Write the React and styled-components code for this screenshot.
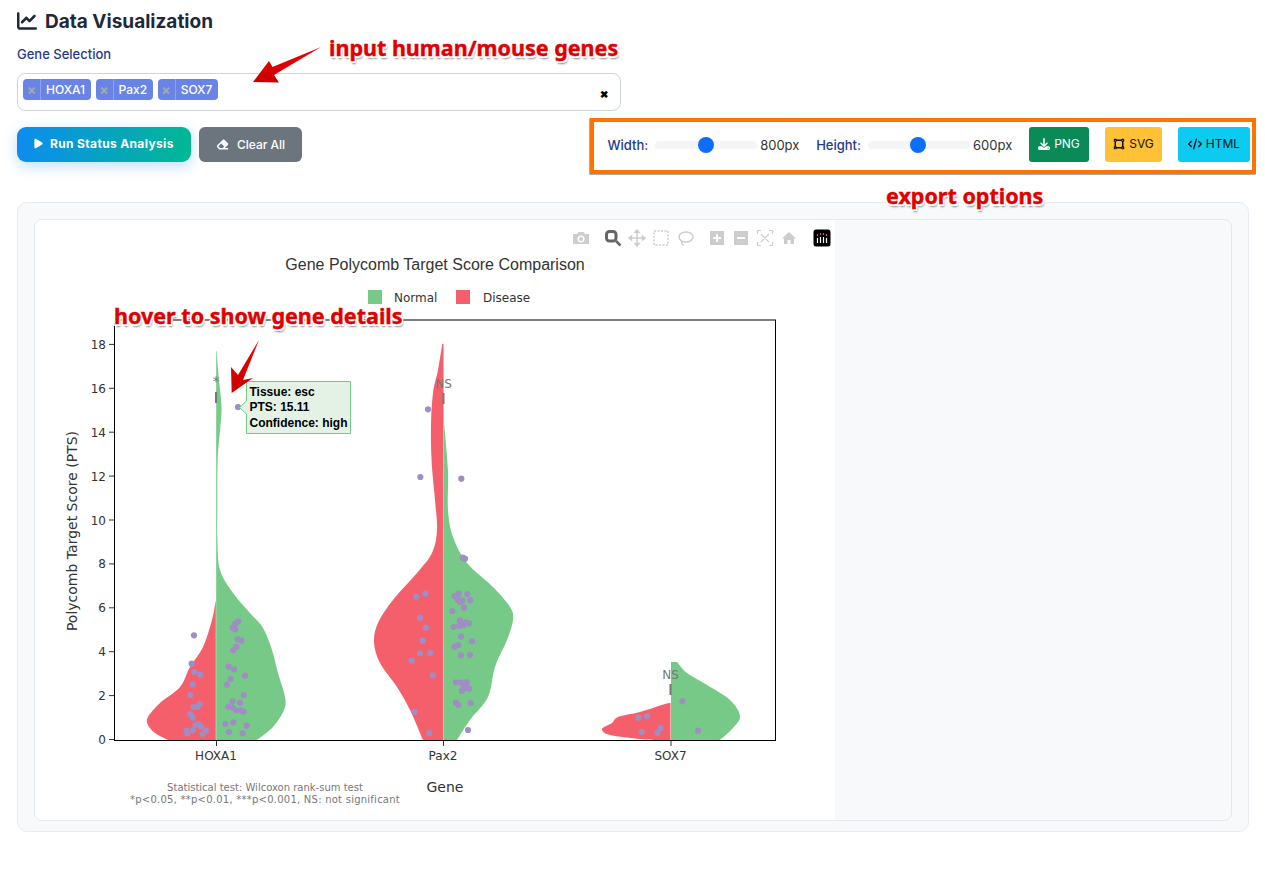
import React from "react";
import styled, { createGlobalStyle } from "styled-components";
import { FaChartLine, FaPlay, FaEraser, FaDownload, FaCode, FaVectorSquare } from "react-icons/fa6";

const GlobalStyle = createGlobalStyle`
  * {
    box-sizing: border-box;
  }
  body {
    margin: 0;
    background: #fff;
    font-family: Inter, "Liberation Sans", sans-serif;
  }
`;

const NORMAL = "#77c987";
const DISEASE = "#f45f6b";
const DOT = "#9f8dc4";

// smooth curve through points read off the reference (page coordinates)
const smooth = (pts) => {
  let d = `M${pts[0][0]} ${pts[0][1]}`;
  for (let i = 0; i < pts.length - 1; i++) {
    const a = pts[Math.max(i - 1, 0)];
    const b = pts[i];
    const c = pts[i + 1];
    const e = pts[Math.min(i + 2, pts.length - 1)];
    const c1x = b[0] + (c[0] - a[0]) / 6;
    const c1y = b[1] + (c[1] - a[1]) / 6;
    const c2x = c[0] - (e[0] - b[0]) / 6;
    const c2y = c[1] - (e[1] - b[1]) / 6;
    d += `C${c1x} ${c1y} ${c2x} ${c2y} ${c[0]} ${c[1]}`;
  }
  return d;
};

const violins = [
  {
    color: NORMAL,
    base: 216.2,
    pts: [
      [216.6, 351], [218.5, 375], [221.5, 407], [220, 430], [218, 453], [217.4, 475], [217.3, 510], [217.4, 540],
      [220, 570], [233, 593], [250, 613], [263, 628], [272, 650], [278, 673], [285, 697], [284, 710], [273, 727], [257, 740],
    ],
  },
  {
    color: DISEASE,
    base: 215.8,
    pts: [
      [215.6, 601], [212, 620], [203, 647], [190, 667], [180, 687], [160, 703], [148, 717], [148, 725], [155, 733], [168, 740],
    ],
  },
  {
    color: DISEASE,
    base: 443.5,
    pts: [
      [442.3, 344], [438, 370], [433, 393], [431, 427], [431.7, 463], [435, 500], [437, 530], [432, 553], [417, 573],
      [393, 600], [378, 623], [374, 642], [380, 663], [397, 687], [410, 710], [423, 740],
    ],
  },
  {
    color: NORMAL,
    base: 443.9,
    pts: [
      [444.2, 425], [448, 470], [448, 510], [453, 537], [467, 563], [493, 587], [510, 607], [513, 620], [507, 640],
      [495, 667], [488, 697], [470, 720], [457, 740],
    ],
  },
  {
    color: DISEASE,
    base: 670.5,
    pts: [
      [670.5, 703], [665, 704], [640, 712], [618, 717], [612, 723], [602, 729], [610, 735], [640, 739], [657, 740],
    ],
  },
  {
    color: NORMAL,
    base: 671,
    pts: [
      [677, 662], [687, 673], [707, 685], [730, 700], [740, 716], [733, 728], [720, 740],
    ],
  },
];

const violinPath = ({ pts, base }) => {
  const last = pts[pts.length - 1];
  return `${smooth(pts)}L${base} ${last[1]}L${base} ${pts[0][1]}Z`;
};

const fromCrop = (ox, oy, list) => list.map(([x, y]) => [ox + x / 3, oy + y / 3]);

const dots = [
  ...fromCrop(100, 540, [
    [282, 286], [275, 371], [283, 396], [301, 404], [278, 434], [271, 465], [299, 492], [293, 500],
    [281, 501], [271, 522], [279, 533], [286, 555], [295, 552], [303, 560], [259, 572], [262, 580],
    [279, 571], [318, 572], [308, 582], [415, 244], [406, 251], [398, 263], [406, 268], [413, 298],
    [424, 302], [409, 320], [400, 331], [386, 380], [402, 388], [435, 407], [392, 417], [381, 434],
    [431, 465], [398, 484], [420, 488], [385, 500], [398, 503], [408, 511], [422, 511], [431, 515],
    [376, 552], [400, 547], [440, 557], [387, 576], [428, 580],
  ]),
  ...fromCrop(360, 330, [
    [204, 238], [181, 441], [304, 446], [308, 683], [315, 686], [196, 791], [169, 800], [296, 791],
    [283, 798], [322, 792], [292, 808], [307, 812], [331, 811], [300, 816], [312, 833], [277, 843],
    [180, 863], [300, 872], [198, 893], [281, 891], [298, 888], [310, 885], [318, 878], [327, 880],
    [303, 920], [188, 932], [336, 933], [295, 945], [284, 950], [180, 970], [211, 969], [303, 976],
    [330, 975], [155, 992], [219, 1036], [288, 1057], [303, 1058], [320, 1056], [318, 1065],
    [327, 1076], [312, 1075], [305, 1083], [288, 1118], [295, 1125], [332, 1119], [164, 1146],
    [324, 1200], [208, 1209],
  ]),
  ...fromCrop(590, 640, [
    [146, 233], [171, 229], [212, 264], [155, 276], [202, 278], [277, 184], [324, 272],
  ]),
  [238, 407],
];

const yTicks = [0, 2, 4, 6, 8, 10, 12, 14, 16, 18];
const xTicks = [
  [216, "HOXA1"],
  [443, "Pax2"],
  [670.5, "SOX7"],
];
const yPos = (v) => 739.5 - v * 21.95;

const Page = styled.div`
  position: relative;
  height: 894px;
  padding: 10px 16px 0 17px;
  overflow: hidden;
`;

const Title = styled.h2`
  display: flex;
  align-items: center;
  gap: 8px;
  margin: 0;
  height: 22px;
  font-size: 19px;
  font-weight: 700;
  color: #1e293b;
`;

const Label = styled.div`
  margin-top: 15px;
  font-size: 13px;
  font-weight: 500;
  line-height: 15px;
  color: #1e3a8a;
`;

const GeneInput = styled.div`
  display: flex;
  align-items: flex-start;
  gap: 5px;
  width: 604px;
  height: 38px;
  margin-top: 11px;
  padding: 5px;
  border: 1px solid #ced4da;
  border-radius: 8px;
  background: #fff;
`;

const Chip = styled.div`
  display: flex;
  align-items: center;
  height: 21px;
  border-radius: 4px;
  background: #6a84e6;
  color: #fff;
  font-size: 12px;
  font-weight: 500;
`;

const ChipClose = styled.span`
  width: 18px;
  height: 100%;
  line-height: 21px;
  text-align: center;
  font-size: 14px;
  font-weight: 700;
  color: #a3a7b3;
  border-right: 1px solid #8ea1ea;
`;

const ChipText = styled.span`
  padding: 0 5.5px 0 5px;
`;

const ClearX = styled.span`
  margin-left: auto;
  margin-right: 7px;
  margin-top: 9px;
  font-size: 10px;
  line-height: 12px;
  font-weight: 900;
  color: #000;
`;

const ActionRow = styled.div`
  display: flex;
  justify-content: space-between;
  align-items: center;
  margin-top: 16px;
  height: 35px;
`;

const Actions = styled.div`
  display: flex;
  gap: 8px;
`;

const RunButton = styled.button`
  display: flex;
  align-items: center;
  gap: 6px;
  width: 174px;
  height: 35px;
  padding: 0 0 2px 16px;
  border: 0;
  border-radius: 9px;
  background: linear-gradient(90deg, #0d8cf0, #00b894);
  box-shadow: 0 4px 14px rgba(13, 140, 240, 0.28);
  color: #fff;
  font-family: inherit;
  font-size: 12px;
  font-weight: 700;
  letter-spacing: 0.35px;
`;

const ClearButton = styled.button`
  display: flex;
  align-items: center;
  justify-content: center;
  gap: 8px;
  width: 103px;
  height: 35px;
  border: 0;
  border-radius: 6px;
  background: #6c757d;
  color: #fff;
  font-family: inherit;
  font-size: 12px;
  font-weight: 500;
`;

const ExportBar = styled.div`
  display: flex;
  align-items: center;
  margin-right: -1px;
`;

const SizeLabel = styled.span`
  margin-left: ${(p) => p.$gap || 0}px;
  font-size: 13px;
  font-weight: 500;
  color: #1e3a8a;
`;

const SliderTrack = styled.div`
  position: relative;
  width: 102px;
  height: 8px;
  margin: 0 3px 0 ${(p) => p.$gap}px;
  border-radius: 4px;
  background: #f3f5f7;
`;

const SliderThumb = styled.div`
  position: absolute;
  top: -4px;
  left: ${(p) => p.$left}px;
  width: 16px;
  height: 16px;
  border-radius: 50%;
  background: #0d6efd;
`;

const SizeValue = styled.span`
  width: 41px;
  font-size: 13px;
  color: #333;
`;

const ExportButton = styled.button`
  display: flex;
  align-items: center;
  justify-content: center;
  gap: 4px;
  width: ${(p) => p.$width}px;
  height: 35px;
  margin-left: ${(p) => p.$gap}px;
  padding: 0 0 2px;
  border: 0;
  border-radius: 3px;
  background: ${(p) => p.$bg};
  color: ${(p) => p.$fg};
  font-family: inherit;
  font-size: 12px;
  font-weight: 400;
`;

const PlotCard = styled.div`
  margin-top: 40px;
  width: 1232px;
  height: 630px;
  padding: 16px 16px 0;
  border: 1px solid #e7ecf3;
  border-radius: 10px;
  background: #f8f9fa;
`;

const PlotFrame = styled.div`
  height: 602px;
  border: 1px solid #e2e8f0;
  border-radius: 8px;
  background: #f8f9fa;
  overflow: hidden;
`;

const PlotSheet = styled.div`
  position: relative;
  width: 800px;
  height: 600px;
  background: #fff;
`;

const Chart = styled.svg`
  display: block;
  width: 800px;
  height: 600px;
`;

const ModeBar = styled.div`
  position: absolute;
  top: 9px;
  left: 537px;
  display: flex;
  align-items: center;
  height: 18px;
`;

const ModeIcon = styled.svg`
  width: 18px;
  height: 18px;
  margin-left: ${(p) => p.$gap || 0}px;
  color: ${(p) => (p.$active ? "#666" : "#cdcdcd")};
`;

const AxisText = styled.text`
  font-family: "DejaVu Sans", sans-serif;
  font-size: 12px;
  fill: #333;
`;

const AxisTitle = styled.text`
  font-family: "DejaVu Sans", sans-serif;
  font-size: 14px;
  fill: #333;
`;

const PlotTitle = styled.text`
  font-family: "Liberation Sans", sans-serif;
  font-size: 16px;
  fill: #333;
`;

const Footnote = styled.text`
  font-family: "DejaVu Sans", sans-serif;
  font-size: 10px;
  letter-spacing: ${(p) => p.$spread || 0}px;
  fill: #777;
`;

const SigMark = styled.text`
  font-family: "DejaVu Sans", sans-serif;
  font-size: ${(p) => p.$size || 12}px;
  fill: #777;
`;

const TipText = styled.text`
  font-family: "Liberation Sans", sans-serif;
  font-size: 12px;
  font-weight: 700;
  fill: #000;
`;

const Callout = styled.div`
  position: absolute;
  left: ${(p) => p.$x}px;
  top: ${(p) => p.$y}px;
  font-family: "Noto Sans", "Open Sans", sans-serif;
  font-size: 21.5px;
  line-height: 28px;
  font-weight: 700;
  white-space: nowrap;
  color: #e00000;
  -webkit-text-stroke: 0.4px #e00000;
  text-shadow: 1.5px 1.5px 0 #fff, -1.5px -1.5px 0 #fff, 1.5px -1.5px 0 #fff, -1.5px 1.5px 0 #fff, 1.5px 2.5px 2px #888;
`;

const ExportHighlight = styled.div`
  position: absolute;
  left: 590px;
  top: 118px;
  width: 666px;
  height: 56px;
  border: 4px solid #ff7300;
  box-shadow: -0.5px 0.5px 0 #555;
  pointer-events: none;
`;

const ArrowLayer = styled.svg`
  position: absolute;
  left: 0;
  top: 0;
  width: 1265px;
  height: 894px;
  pointer-events: none;
`;

const Slider = ({ gap, thumb }) => (
  <SliderTrack $gap={gap}>
    <SliderThumb $left={thumb} />
  </SliderTrack>
);

const ModeBarIcons = () => (
  <ModeBar>
    <ModeIcon viewBox="0 0 18 18" fill="currentColor">
      <path d="M1 5h4l1.500-2h5L13 5h4v10H1z" />
      <circle cx="9" cy="10" r="3.500" fill="#fff" />
      <circle cx="9" cy="10" r="2" />
    </ModeIcon>
    <ModeIcon $gap={14} $active viewBox="0 0 18 18" fill="none" stroke="currentColor">
      <rect x="2.500" y="2.500" width="9.500" height="9.500" rx="3" strokeWidth="3" />
      <path d="M12 12l4.500 4.500" strokeWidth="2.500" />
    </ModeIcon>
    <ModeIcon $gap={6} viewBox="0 0 18 18" fill="none" stroke="currentColor" strokeWidth="1.500">
      <path d="M9 2v14M2 9h14M9 1l-2 2.500h4zM9 17l-2-2.500h4zM1 9l2.500-2v4zM17 9l-2.500-2v4z" />
    </ModeIcon>
    <ModeIcon $gap={6} viewBox="0 0 18 18" fill="none" stroke="currentColor" strokeWidth="1.500" strokeDasharray="2 1.500">
      <rect x="2" y="2" width="14" height="14" />
    </ModeIcon>
    <ModeIcon $gap={6} viewBox="0 0 18 18" fill="none" stroke="currentColor" strokeWidth="1.500">
      <ellipse cx="10" cy="8" rx="7" ry="5" />
      <path d="M6 12c-1 2 0 4 2 4" />
    </ModeIcon>
    <ModeIcon $gap={14} viewBox="0 0 18 18" fill="currentColor">
      <path fillRule="evenodd" d="M2 2h14v14H2zM8 5v3H5v2h3v3h2v-3h3V8h-3V5z" />
    </ModeIcon>
    <ModeIcon $gap={6} viewBox="0 0 18 18" fill="currentColor">
      <path fillRule="evenodd" d="M2 2h14v14H2zM5 8v2h8V8z" />
    </ModeIcon>
    <ModeIcon $gap={6} viewBox="0 0 18 18" fill="none" stroke="currentColor" strokeWidth="1.200">
      <path d="M1.500 5V1.500H5M13 1.500h3.500V5M16.500 13v3.500H13M5 16.500H1.500V13M5 5l8 8M13 5l-8 8" />
    </ModeIcon>
    <ModeIcon $gap={6} viewBox="0 0 18 18" fill="currentColor">
      <path d="M9 3L2 9.500h2V15h3.500v-4h3v4H14V9.500h2z" />
    </ModeIcon>
    <ModeIcon $gap={15} viewBox="0 0 18 18">
      <rect x="0.500" y="0.500" width="17" height="17" rx="2.500" fill="#000" />
      <path d="M4.500 9v5M7.500 8v6M10.500 8v6M13.500 9v5" stroke="#fff" strokeWidth="1.200" />
      <path d="M4.500 5v2M7.500 4v2M10.500 4v2M13.500 5v2" stroke="#f0506e" strokeWidth="1.200" />
    </ModeIcon>
  </ModeBar>
);

const ViolinChart = () => (
  <Chart viewBox="35 220 800 600">
    <PlotTitle x="435" y="270" textAnchor="middle">
      Gene Polycomb Target Score Comparison
    </PlotTitle>

    <rect x="368" y="290" width="14" height="14" fill={NORMAL} />
    <AxisText x="394" y="302">Normal</AxisText>
    <rect x="456" y="290" width="14" height="14" fill={DISEASE} />
    <AxisText x="483" y="302">Disease</AxisText>

    {violins.map((v) => (
      <path key={v.pts[0].join()} d={violinPath(v)} fill={v.color} />
    ))}

    <SigMark x="216" y="386" textAnchor="middle" $size={14}>*</SigMark>
    <rect x="215" y="392" width="2" height="11" fill="#777" />
    <SigMark x="443.500" y="388" textAnchor="middle">NS</SigMark>
    <rect x="442.500" y="393" width="2" height="11" fill="#777" />
    <SigMark x="670.500" y="679" textAnchor="middle">NS</SigMark>
    <rect x="669.500" y="684" width="2" height="11" fill="#777" />

    {dots.map(([x, y]) => (
      <circle key={`${x}-${y}`} cx={x} cy={y} r="3.100" fill={DOT} />
    ))}

    <rect x="114.500" y="320" width="661" height="420.500" fill="none" stroke="#000" />
    {yTicks.map((v) => (
      <g key={v}>
        <path d={`M109 ${yPos(v)}h5`} stroke="#333" />
        <AxisText x="106" y={yPos(v) + 4.500} textAnchor="end">{v}</AxisText>
      </g>
    ))}
    {xTicks.map(([x, name]) => (
      <g key={name}>
        <path d={`M${x + 0.500} 741v5`} stroke="#333" />
        <AxisText x={x} y="760" textAnchor="middle">{name}</AxisText>
      </g>
    ))}

    <AxisTitle x="445" y="792" textAnchor="middle">Gene</AxisTitle>
    <AxisTitle x="77" y="531" textAnchor="middle" transform="rotate(-90 77 531)">
      Polycomb Target Score (PTS)
    </AxisTitle>
    <Footnote x="265" y="791" textAnchor="middle">Statistical test: Wilcoxon rank-sum test</Footnote>
    <Footnote x="265" y="803" textAnchor="middle" $spread={0.24}>*p&lt;0.05, **p&lt;0.01, ***p&lt;0.001, NS: not significant</Footnote>

    <path
      d="M246.500 381.500H350.500V433.500H246.500V414L239.500 407.500L246.500 401Z"
      fill="#e4f2e6"
      stroke={NORMAL}
    />
    <TipText x="249.500" y="396">Tissue: esc</TipText>
    <TipText x="249.500" y="411">PTS: 15.11</TipText>
    <TipText x="249.500" y="427">Confidence: high</TipText>
  </Chart>
);

export default function App() {
  return (
    <Page>
      <GlobalStyle />
      <Title>
        <FaChartLine size={20} />
        Data Visualization
      </Title>
      <Label>Gene Selection</Label>
      <GeneInput>
        {["HOXA1", "Pax2", "SOX7"].map((gene) => (
          <Chip key={gene}>
            <ChipClose>×</ChipClose>
            <ChipText>{gene}</ChipText>
          </Chip>
        ))}
        <ClearX>✖</ClearX>
      </GeneInput>

      <ActionRow>
        <Actions>
          <RunButton>
            <FaPlay size={11} />
            Run Status Analysis
          </RunButton>
          <ClearButton>
            <FaEraser size={13} />
            Clear All
          </ClearButton>
        </Actions>
        <ExportBar>
          <SizeLabel>Width:</SizeLabel>
          <Slider gap={7} thumb={43} />
          <SizeValue>800px</SizeValue>
          <SizeLabel $gap={15}>Height:</SizeLabel>
          <Slider gap={7} thumb={42} />
          <SizeValue>600px</SizeValue>
          <ExportButton $width={60} $gap={15} $bg="#0a8a56" $fg="#fff">
            <FaDownload size={12} />
            PNG
          </ExportButton>
          <ExportButton $width={57} $gap={16} $bg="#ffc135" $fg="#111">
            <FaVectorSquare size={12} />
            SVG
          </ExportButton>
          <ExportButton $width={72} $gap={16} $bg="#0dcaf0" $fg="#111">
            <FaCode size={14} />
            HTML
          </ExportButton>
        </ExportBar>
      </ActionRow>

      <PlotCard>
        <PlotFrame>
          <PlotSheet>
            <ViolinChart />
            <ModeBarIcons />
          </PlotSheet>
        </PlotFrame>
      </PlotCard>

      <ExportHighlight />
      <Callout $x={329} $y={34}>input human/mouse genes</Callout>
      <Callout $x={886} $y={182}>export options</Callout>
      <Callout $x={114} $y={302}>hover to show gene details</Callout>
      <ArrowLayer viewBox="0 0 1265 894">
        <defs>
          <linearGradient id="arrowFill" x1="0" y1="0" x2="0" y2="1">
            <stop offset="0" stopColor="#f20000" />
            <stop offset="1" stopColor="#c80000" />
          </linearGradient>
        </defs>
        <path d="M321 47L272.500 67L269 61L253 82L279 82.500L274 75Z" fill="url(#arrowFill)" />
        <path d="M259 340L238 375L231 367L231.700 393L253 378L243 380Z" fill="url(#arrowFill)" />
      </ArrowLayer>
    </Page>
  );
}
